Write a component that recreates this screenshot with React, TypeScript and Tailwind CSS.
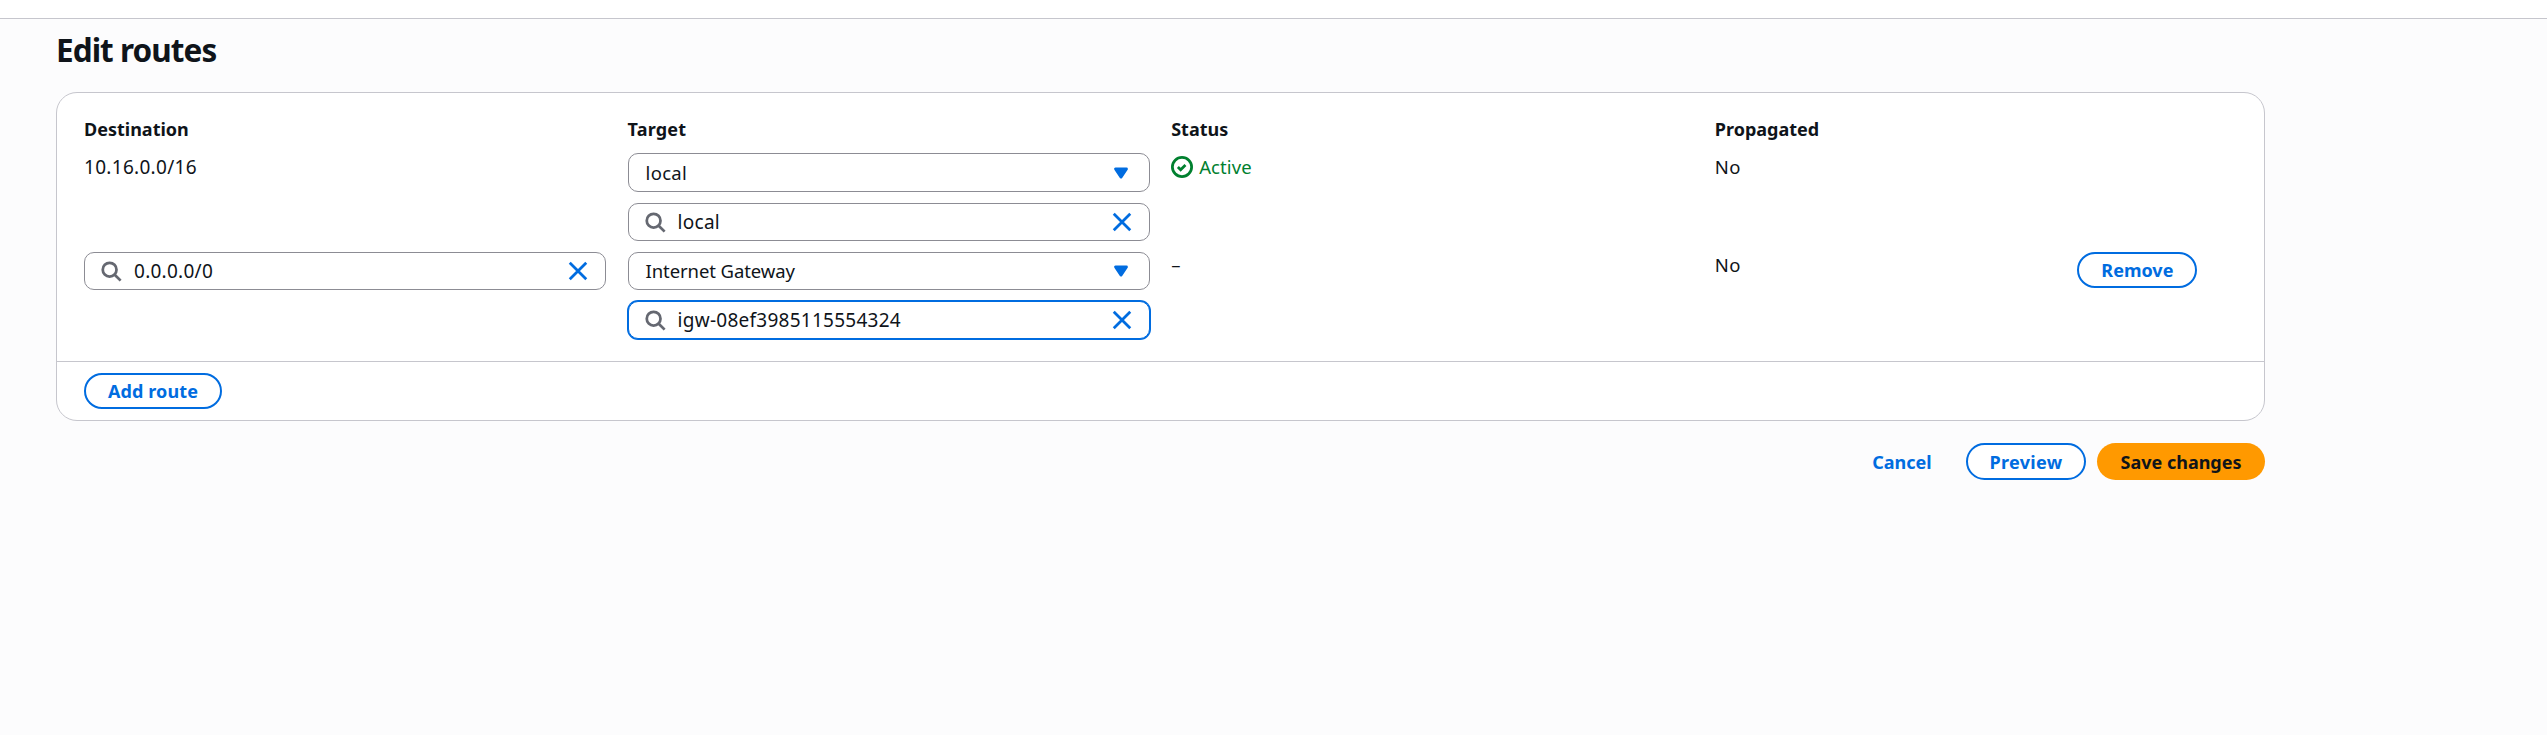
import React from "react";

type Route = {
  destination: string;
  editable: boolean;
  targetType: string;
  target: string;
  focused?: boolean;
  active: boolean;
  propagated: string;
};

const routes: Route[] = [
  { destination: "10.16.0.0/16", editable: false, targetType: "local", target: "local", active: true, propagated: "No" },
  { destination: "0.0.0.0/0", editable: true, targetType: "Internet Gateway", target: "igw-08ef3985115554324", focused: true, active: false, propagated: "No" },
];

function Icon({ children, className = "" }: { children: React.ReactNode; className?: string }) {
  return (
    <svg viewBox="0 0 16 16" className={"size-[22px] shrink-0 " + className} fill="none" stroke="currentColor" strokeWidth="2">
      {children}
    </svg>
  );
}

function SearchIcon() {
  return (
    <Icon className="text-[#656871]">
      <circle cx="7" cy="7" r="5" />
      <path d="m15 15-4.5-4.5" />
    </Icon>
  );
}

function CloseIcon() {
  return (
    <Icon className="text-[#006ce0]">
      <path d="m2 2 12 12M14 2 2 14" />
    </Icon>
  );
}

function CaretIcon() {
  return (
    <Icon className="text-[#006ce0]">
      <path d="M4 5h8l-4 6-4-6z" fill="currentColor" strokeWidth="2" strokeLinejoin="round" />
    </Icon>
  );
}

function SuccessIcon() {
  return (
    <Icon>
      <circle cx="8" cy="8" r="7" />
      <path d="m5 8 2 2 3.521-3.521" />
    </Icon>
  );
}

function Select({ value, className }: { value: string; className: string }) {
  return (
    <div className={"flex items-center justify-between rounded-[10px] border border-[#8c8c94] bg-white pl-[17px] pr-[17px] " + className}>
      <span>{value}</span>
      <CaretIcon />
    </div>
  );
}

function SearchInput({ value, focused }: { value: string; focused?: boolean }) {
  return (
    <div
      className={
        "flex h-[38px] items-center rounded-[10px] border bg-white pl-[15px] pr-4 " +
        (focused ? "border-[#006ce0] shadow-[0_0_0_1px_#006ce0]" : "border-[#8c8c94]")
      }
    >
      <SearchIcon />
      <span className="ml-3 flex-1 text-[19px] tracking-[0.26px]">{value}</span>
      <CloseIcon />
    </div>
  );
}

function Button({ children, className = "" }: { children: React.ReactNode; className?: string }) {
  return (
    <button className={"flex items-center justify-center rounded-full text-[18px] font-bold whitespace-nowrap " + className}>
      {children}
    </button>
  );
}

const outline = "border-2 border-[#006ce0] bg-white text-[#006ce0] ";
const columns = "grid grid-cols-[522px_522px_522px_341px_120px] gap-x-[21.6px]";

export default function App() {
  return (
    <div className="flex h-[735px] w-full flex-col bg-[#fcfcfd] font-['Noto_Sans',sans-serif] text-[18.5px] leading-6 text-[#0f141a]">
      <header className="h-[19px] shrink-0 border-b border-[#c6c6cd] bg-white" />
      <main className="ml-14 w-[2209px]">
        <h1 className="mt-[11px] h-10 text-[31.5px] leading-10 font-bold tracking-[-0.95px]">Edit routes</h1>
        <section className="mt-[22px] rounded-[21px] border border-[#c6c6cd] bg-white">
          <div className="h-[268px] px-[27px] pt-6">
            <div className={columns + " h-9 text-[18px] font-bold"}>
              <span>Destination</span>
              <span className="tracking-[0.2px]">Target</span>
              <span>Status</span>
              <span>Propagated</span>
            </div>
            {routes.map((r) => (
              <div key={r.destination} className={columns + " h-[99px]"}>
                {r.editable ? (
                  <SearchInput value={r.destination} />
                ) : (
                  <span className="pt-[1.5px] text-[19px] tracking-[0.3px]">{r.destination}</span>
                )}
                <div className="flex flex-col gap-[11px]">
                  <Select value={r.targetType} className={r.editable ? "h-[38px] tracking-[-0.1px]" : "h-[39px] tracking-[0.3px]"} />
                  <SearchInput value={r.target} focused={r.focused} />
                </div>
                {r.active ? (
                  <span className="flex h-[26px] items-center gap-1.5 pt-px text-[#00802f] tracking-[0.1px]">
                    <SuccessIcon />
                    Active
                  </span>
                ) : (
                  <span className="pt-px">–</span>
                )}
                <span className={(r.active ? "pt-[1.5px]" : "pt-px") + " tracking-[0.5px]"}>{r.propagated}</span>
                {r.editable && <Button className={outline + "h-9 w-[120px]"}>Remove</Button>}
              </div>
            ))}
          </div>
          <div className="flex h-[59px] items-start border-t border-[#c6c6cd] px-[27px] pt-[11px]">
            <Button className={outline + "h-9 w-[138px] tracking-[0.1px]"}>Add route</Button>
          </div>
        </section>
        <div className="mt-[22px] flex h-[37px] items-stretch justify-end">
          <Button className="mr-[9px] w-[110px] text-[#006ce0]">Cancel</Button>
          <Button className={outline + "mr-[11px] w-[120px] tracking-[0.3px]"}>Preview</Button>
          <Button className="w-[168px] bg-[#ff9900]">Save changes</Button>
        </div>
      </main>
    </div>
  );
}
